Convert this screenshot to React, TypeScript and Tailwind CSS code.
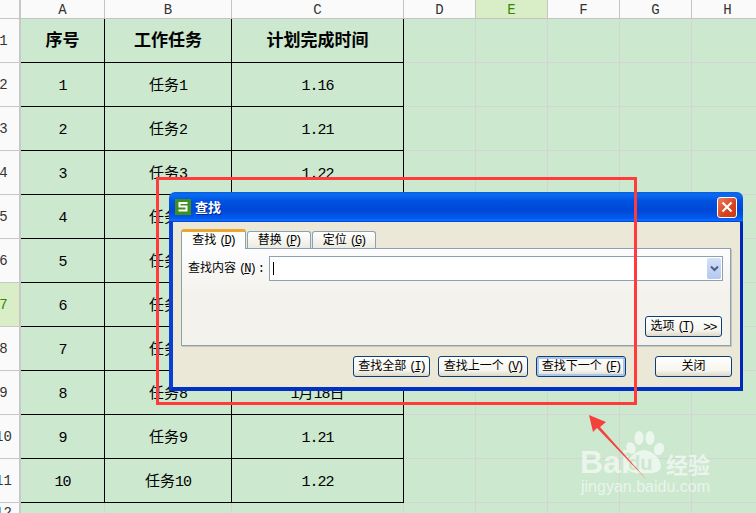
const MONO = "font-['Liberation_Mono','Noto_Sans_CJK_SC',monospace]";

const columns = ["A", "B", "C", "D", "E", "F", "G", "H"];
const widths = ["w-[84px]", "w-[127px]", "w-[172px]", "w-[72px]", "w-[72px]", "w-[72px]", "w-[72px]", "w-[72px]"];

const rows = [
  { a: "序号", b: "工作任务", c: "计划完成时间", head: true },
  { a: "1", b: "任务1", c: "1.16" },
  { a: "2", b: "任务2", c: "1.21" },
  { a: "3", b: "任务3", c: "1.22" },
  { a: "4", b: "任务4", c: "" },
  { a: "5", b: "任务5", c: "" },
  { a: "6", b: "任务6", c: "" },
  { a: "7", b: "任务7", c: "" },
  { a: "8", b: "任务8", c: "1月18日" },
  { a: "9", b: "任务9", c: "1.21" },
  { a: "10", b: "任务10", c: "1.22" },
];

// latin runs are squeezed a bit, SimSun digits are narrower than Liberation Mono
function Txt({ text }: { text: string }) {
  const parts = text.split(/([0-9.]+)/).filter(Boolean);
  return (
    <>
      {parts.map((p, i) =>
        /[0-9.]/.test(p) ? (
          <span key={i} className="tracking-[-1px]">
            {p}
          </span>
        ) : (
          <span key={i}>{p}</span>
        )
      )}
    </>
  );
}

function HeaderRow() {
  return (
    <div className="flex h-[19px] shrink-0 border-b border-[#c4c4c4] bg-[#fafafa]">
      <div className="w-[21px] shrink-0 border-r-2 border-[#c8c8c8]" />
      {columns.map((c, i) => (
        <div
          key={c}
          className={`${widths[i]} shrink-0 flex items-center justify-center pt-[2px] border-r border-[#c4c4c4] text-[14px] ${
            c === "E" ? "bg-[#d9eec6] text-[#2f8a00]" : "text-[#333333]"
          }`}
        >
          {c}
        </div>
      ))}
    </div>
  );
}

function RowNumber({ n }: { n: number }) {
  return (
    <div
      className={`w-[21px] shrink-0 flex items-center justify-center pt-[2px] overflow-hidden border-r-2 border-b border-[#c8c8c8] text-[14px] ${
        n === 7 ? "bg-[#d9eec6] text-[#2f8a00]" : "bg-[#fafafa] text-[#333333]"
      }`}
    >
      <span className="w-2 mr-3 flex justify-center whitespace-nowrap">{n}</span>
    </div>
  );
}

function SheetRow({ n }: { n: number }) {
  const row = rows[n - 1];
  const cellClass = `flex items-center justify-center shrink-0 border-r border-b border-black text-black ${
    row.head ? "pt-[3px] text-[17px] font-bold" : "pt-[5px] text-[15px]"
  }`;
  return (
    <div className="flex h-[44px] shrink-0">
      <RowNumber n={n} />
      <div className={`${widths[0]} ${cellClass}`}>
        <Txt text={row.a} />
      </div>
      <div className={`${widths[1]} ${cellClass}`}>
        <Txt text={row.b} />
      </div>
      <div className={`${widths[2]} ${cellClass}`}>
        <Txt text={row.c} />
      </div>
      {columns.slice(3).map((c, i) => (
        <div key={c} className={`${widths[i + 3]} shrink-0 border-r border-b border-[#d4d4d4]`} />
      ))}
    </div>
  );
}

function Accel({ k }: { k: string }) {
  return (
    <span className="ml-[3px] tracking-[-2px]">
      (<u>{k}</u>)
    </span>
  );
}

function Btn({ label, k, w, primary }: { label: string; k?: string; w: string; primary?: boolean }) {
  return (
    <div
      className={`${w} h-[21px] flex items-center justify-center pt-px rounded-[3px] border border-[#0b3f75] bg-[linear-gradient(#ffffff,#f6f5ee_70%,#dcd8c8)] text-[12px] text-black ${
        primary ? "shadow-[inset_0_0_0_2px_#a9c4ee]" : ""
      }`}
    >
      {label}
      {k && <Accel k={k} />}
    </div>
  );
}

function Tab({ label, k, active }: { label: string; k: string; active?: boolean }) {
  return active ? (
    <div className="relative z-10 -mb-px h-[20px] w-[65px] flex items-center justify-center rounded-t-[3px] border-x border-[#8ba0b0] border-t-[3px] border-t-[#eca52e] bg-[#fdfdfb] text-[12px] text-black">
      {label}
      <Accel k={k} />
    </div>
  ) : (
    <div className="h-[17px] w-[64px] flex items-center justify-center pt-px rounded-t-[3px] border-x border-t border-[#8ba0b0] bg-[linear-gradient(#ffffff,#ecebe2)] text-[12px] text-black">
      {label}
      <Accel k={k} />
    </div>
  );
}

function Dialog() {
  return (
    <div className={`absolute left-[169px] top-[192px] w-[574px] h-[199px] flex flex-col ${MONO}`}>
      {/* title bar */}
      <div className="h-[30px] shrink-0 flex items-center pl-[6px] pr-[6px] rounded-t-[6px] bg-[linear-gradient(#0a5fe0,#0a6cf2_10%,#0052e0_30%,#0047d6_60%,#0058ea_85%,#0a6cff_95%,#0036c0)]">
        <svg width="16" height="16" viewBox="0 0 16 16" className="shrink-0">
          <rect width="16" height="16" fill="#3f8f1f" />
          <path d="M12.5 4H4.5V7.5H11.5V11.5H3.5" fill="none" stroke="#ffffff" strokeWidth="2" />
        </svg>
        <span className="ml-1 pt-[3px] text-[13px] font-bold text-white [text-shadow:1px_1px_0_#002a90]">查找</span>
        <div className="ml-auto w-[20px] h-[21px] flex items-center justify-center rounded-[3px] border border-white bg-[linear-gradient(135deg,#ec7d5c,#d8431c_60%,#c93a18)]">
          <svg width="12" height="12" viewBox="0 0 12 12">
            <path d="M1.5 1.5L10.5 10.5M10.5 1.5L1.5 10.5" stroke="#ffffff" strokeWidth="2.2" />
          </svg>
        </div>
      </div>

      {/* client area */}
      <div className="flex-1 flex flex-col pt-[7px] pl-2 pr-2 bg-[#ebe8d8] border-l-[4px] border-r-[3px] border-b-[4px] border-l-[#0a3fd4] border-r-[#0028b8] border-b-[#0030c4]">
        <div className="flex items-end gap-px h-[19px]">
          <Tab label="查找" k="D" active />
          <Tab label="替换" k="P" />
          <Tab label="定位" k="G" />
        </div>
        <div className="mr-px h-[98px] flex flex-col border border-[#8ba0b0] shadow-[1px_1px_0_#c8c6b8] bg-[linear-gradient(#fdfdff,#f4f2ec_45%)] px-[6px] pt-[7px] pb-2">
          <div className="flex items-center">
            <span className="w-[81px] shrink-0 pt-px text-[12px] text-black whitespace-nowrap">
              查找内容
              <Accel k="N" />
              <span className="ml-[3px]">:</span>
            </span>
            <div className="flex-1 mr-[1px] h-[25px] flex items-center justify-between pl-[3px] pr-px border border-[#8ba0b0] bg-white">
              <div className="w-px h-[13px] bg-black" />
              <div className="w-[14px] h-[21px] flex items-center justify-center rounded-[2px] bg-[linear-gradient(#d4e0f8,#b4c8f0)]">
                <svg width="9" height="7" viewBox="0 0 9 7">
                  <path d="M1 1.5L4.5 5L8 1.5" fill="none" stroke="#4d6185" strokeWidth="2" />
                </svg>
              </div>
            </div>
          </div>
          <div className="mt-auto flex justify-end pr-[2px]">
            <div className="w-[77px] h-[21px] flex items-center justify-center pt-px rounded-[3px] border border-[#0b3f75] bg-[linear-gradient(#ffffff,#f6f5ee_70%,#dcd8c8)] text-[12px] text-black">
              选项
              <Accel k="T" />
              <span className="ml-[10px] font-['Liberation_Sans',sans-serif] text-[13px] tracking-[-1px]">&gt;&gt;</span>
            </div>
          </div>
        </div>
        <div className="mt-[10px] flex justify-end gap-2">
          <Btn label="查找全部" k="I" w="w-[77px]" />
          <Btn label="查找上一个" k="V" w="w-[90px]" />
          <Btn label="查找下一个" k="F" w="w-[90px]" primary />
          <Btn label="关闭" w="w-[77px] ml-[21px]" />
        </div>
      </div>
    </div>
  );
}

function Watermark() {
  return (
    <div className="absolute left-[578px] top-[430px] w-[140px] h-[66px] text-white/60">
      <span className="absolute left-[2px] top-[16px] text-[32px] leading-[32px] font-bold font-['Liberation_Sans',sans-serif]">
        Bai
      </span>
      <svg width="42" height="44" viewBox="0 0 42 44" className="absolute left-[46px] top-0">
        <ellipse cx="7" cy="18" rx="4.5" ry="6" fill="#ffffff" fillOpacity="0.6" transform="rotate(-20 7 18)" />
        <ellipse cx="15" cy="8" rx="4.5" ry="7" fill="#ffffff" fillOpacity="0.6" />
        <ellipse cx="26" cy="8" rx="4.5" ry="7" fill="#ffffff" fillOpacity="0.6" />
        <ellipse cx="35" cy="19" rx="5" ry="6.5" fill="#ffffff" fillOpacity="0.6" transform="rotate(20 35 19)" />
        <path d="M20 20C28 20 37 29 37 36C37 42 30 44 20 43C10 44 3 42 3 36C3 29 12 20 20 20Z" fill="#ffffff" fillOpacity="0.6" />
      </svg>
      <span className="absolute left-[50px] top-[23px] text-[20px] leading-[20px] font-bold text-[#cce8cf] font-['Liberation_Sans',sans-serif]">
        du
      </span>
      <span className="absolute left-[88px] top-[21px] text-[22px] leading-[24px] font-bold font-['Noto_Sans_CJK_SC',sans-serif]">
        经验
      </span>
      <span className="absolute left-[3px] top-[48px] text-[16px] leading-[18px] font-['Liberation_Sans',sans-serif] whitespace-nowrap">
        jingyan.baidu.com
      </span>
    </div>
  );
}

export default function App() {
  return (
    <div className={`relative w-[756px] h-[513px] overflow-hidden bg-[#cce8cf] ${MONO}`}>
      <div className="flex flex-col">
        <HeaderRow />
        {rows.map((_, i) => (
          <SheetRow key={i} n={i + 1} />
        ))}
        {/* row 12 */}
        <div className="flex h-[19px] shrink-0">
          <RowNumber n={12} />
          {columns.map((c, i) => (
            <div key={c} className={`${widths[i]} shrink-0 border-r border-[#d4d4d4]`} />
          ))}
        </div>
      </div>

      <Dialog />

      {/* red annotation */}
      <div className="absolute left-[156px] top-[177px] w-[481px] h-[228px] border-[3px] border-[#ff3b3b]" />

      <Watermark />

      <svg width="756" height="513" className="absolute left-0 top-0">
        <polygon points="589,415 606,422 600,427 647,480 597,428 593,432" fill="#f5413c" />
      </svg>
    </div>
  );
}
